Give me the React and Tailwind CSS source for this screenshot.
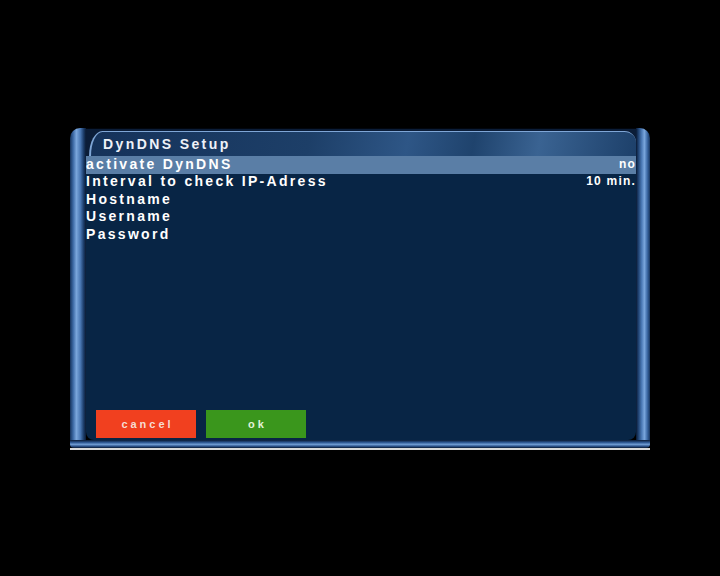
import React from 'react'

const rows = [
  { label: 'activate DynDNS', value: 'no', active: true },
  { label: 'Interval to check IP-Adress', value: '10 min.' },
  { label: 'Hostname', value: '' },
  { label: 'Username', value: '' },
  { label: 'Password', value: '' },
]

const font = { fontFamily: '"Liberation Sans", Arial, sans-serif' }

function Pillar({ side }) {
  // vertical chrome pillar of the OSD frame
  const round = side === 'left' ? 'rounded-tl-[10px]' : 'rounded-tr-[10px]'
  const grad =
    side === 'left'
      ? 'bg-[linear-gradient(90deg,#16335c_0%,#3d6aa6_20%,#7aa6dc_40%,#4a78b4_65%,#1c3d6a_85%,#0a1a33_100%)]'
      : 'bg-[linear-gradient(90deg,#0a1a33_0%,#1c3d6a_15%,#4a78b4_40%,#7aa6dc_60%,#3d6aa6_80%,#16335c_100%)]'
  return <div className={`${side === 'left' ? 'w-[16px]' : 'w-[14px]'} h-full ${grad} ${round}`} />
}

export default function App() {
  return (
    <div className="w-[720px] h-[576px] bg-black pt-[128px] pl-[70px]" style={font}>
      <div className="w-[580px] h-[322px] flex flex-col">
        <div className="flex h-[312px]">
          <Pillar side="left" />

          {/* Inner panel */}
          <div className="flex-1 flex flex-col bg-[#082545] rounded-bl-[8px] rounded-br-[8px]">
            {/* Title bar */}
            <div className="h-[28px] bg-[#0b1d38] pl-[3px] pt-[2px] border-t border-[#02060e]">
              <div className="h-full rounded-tl-[14px_26px] rounded-tr-[12px] border-t border-l-2 border-[#7fa6d6] bg-[linear-gradient(100deg,#15325a_0%,#1d3f68_40%,#2e5686_58%,#1f436d_70%,#3a6392_82%,#1d406a_100%)] flex items-center pl-[12px]">
                <span className="text-[14px] font-bold tracking-[2.4px] text-[#eef2f8] leading-none">DynDNS Setup</span>
              </div>
            </div>

            {/* Settings list */}
            <div className="flex flex-col">
              {rows.map(r => (
                <div
                  key={r.label}
                  className={`h-[17.5px] flex items-center justify-between ${r.active ? 'bg-[#5a7ea6]' : ''}`}
                >
                  <span className="text-[14px] font-bold tracking-[2.3px] text-white leading-none -mt-[2px]">{r.label}</span>
                  <span className="text-[12px] font-bold tracking-[1.2px] text-white leading-none -mt-[2px]">{r.value}</span>
                </div>
              ))}
            </div>

            <div className="flex-1" />

            {/* Buttons */}
            <div className="flex gap-[10px] pl-[10px] pb-[2px]">
              <div className="w-[100px] h-[28px] bg-[#f1401f] flex items-center justify-center">
                <span className="text-[11px] font-bold tracking-[3px] text-[#f6dcd2] pl-[3px]">cancel</span>
              </div>
              <div className="w-[100px] h-[28px] bg-[#3a961c] flex items-center justify-center">
                <span className="text-[11px] font-bold tracking-[3px] text-[#e2f2d8] pl-[3px]">ok</span>
              </div>
            </div>
          </div>

          <Pillar side="right" />
        </div>
        {/* Bottom rail of the frame */}
        <div className="h-[8px] bg-[linear-gradient(180deg,#0a1a33_0%,#2d5690_30%,#6f9bd2_55%,#2a4f86_80%,#0a1a33_100%)] rounded-bl-[4px] rounded-br-[4px]" />
        <div className="h-[2px] bg-[#d8d8d8]" />
      </div>
    </div>
  )
}
